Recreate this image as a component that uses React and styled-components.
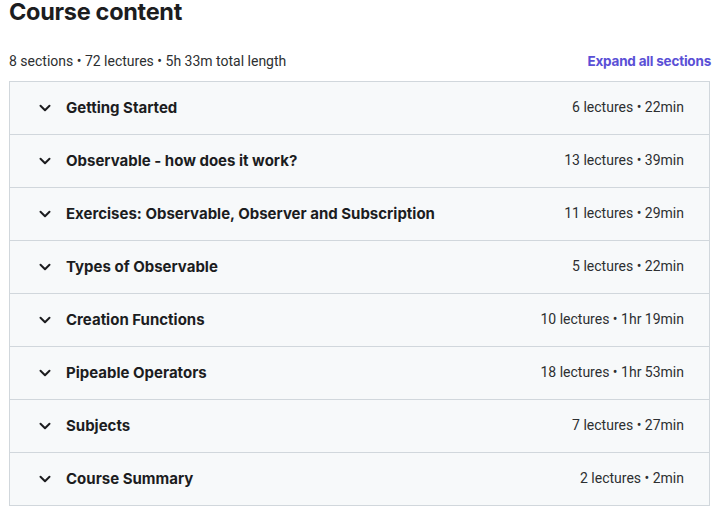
import React from "react";
import styled, { createGlobalStyle } from "styled-components";

const GlobalStyle = createGlobalStyle`
  body {
    margin: 0;
    font-family: Inter, "Noto Sans", "Liberation Sans", sans-serif;
    color: #2d2f31;
    background: #ffffff;
  }
`;

const sections = [
  { title: "Getting Started", lectures: 6, length: "22min" },
  { title: "Observable - how does it work?", lectures: 13, length: "39min" },
  { title: "Exercises: Observable, Observer and Subscription", lectures: 11, length: "29min" },
  { title: "Types of Observable", lectures: 5, length: "22min" },
  { title: "Creation Functions", lectures: 10, length: "1hr 19min" },
  { title: "Pipeable Operators", lectures: 18, length: "1hr 53min" },
  { title: "Subjects", lectures: 7, length: "27min" },
  { title: "Course Summary", lectures: 2, length: "2min" },
];

const Chevron = () => (
  <svg width="12" height="8" viewBox="0 0 12 8" fill="none">
    <path
      d="M1.5 1.8L6 6.2l4.5-4.4"
      stroke="#1c1d1f"
      strokeWidth="2"
      strokeLinecap="round"
      strokeLinejoin="round"
    />
  </svg>
);

const App = () => {
  return (
    <>
      <GlobalStyle />
      <Page>
        <Heading>Course content</Heading>
        <StatsBar>
          <Stats>8 sections • 72 lectures • 5h 33m total length</Stats>
          <ExpandButton>Expand all sections</ExpandButton>
        </StatsBar>
        <Accordion>
          {sections.map((s) => (
            <Row key={s.title}>
              <ChevronWrap>
                <Chevron />
              </ChevronWrap>
              <SectionTitle>{s.title}</SectionTitle>
              <SectionMeta>
                {s.lectures} lectures • {s.length}
              </SectionMeta>
            </Row>
          ))}
        </Accordion>
      </Page>
    </>
  );
};

const Page = styled.div`
  width: 701px;
  padding-left: 9px;
`;

const Heading = styled.h2`
  margin: 0;
  font-size: 23.5px;
  line-height: 24px;
  font-weight: 700;
  color: #1c1d1f;
  letter-spacing: -0.3px;
`;

const StatsBar = styled.div`
  display: flex;
  justify-content: space-between;
  align-items: center;
  margin-top: 26px;
  height: 22px;
  margin-bottom: 9px;
`;

const Stats = styled.span`
  font-family: Roboto, "Liberation Sans", sans-serif;
  font-size: 14px;
  color: #2d2f31;
`;

const ExpandButton = styled.button`
  border: none;
  background: none;
  padding: 0;
  font-family: inherit;
  font-size: 13.5px;
  font-weight: 700;
  letter-spacing: -0.2px;
  color: #5a50d6;
  cursor: pointer;
  margin-right: -1px;
`;

const Accordion = styled.div`
  border: 1px solid #d1d7dc;
  border-bottom: none;
`;

const Row = styled.div`
  display: flex;
  align-items: center;
  height: 52px;
  padding: 0 25px 0 29px;
  background: #f7f9fa;
  border-bottom: 1px solid #d1d7dc;
`;

const ChevronWrap = styled.span`
  display: flex;
  width: 12px;
  margin-right: 15px;
  margin-top: -1px;
`;

const SectionTitle = styled.span`
  flex: 1;
  font-size: 15px;
  font-weight: 700;
  color: #1c1d1f;
  margin-top: -2px;
`;

const SectionMeta = styled.span`
  font-family: Roboto, "Liberation Sans", sans-serif;
  font-size: 14px;
  color: #2d2f31;
  margin-top: -2px;
`;

export default App;
